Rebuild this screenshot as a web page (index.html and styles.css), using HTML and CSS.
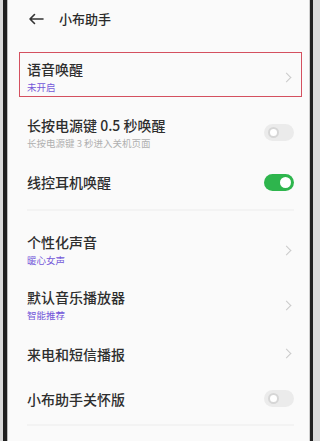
FILE: index.html
```html
<!DOCTYPE html>
<html lang="zh">
<head>
<meta charset="utf-8">
<link rel="stylesheet" href="styles.css">
</head>
<body>
<div class="frame">
  <div class="phone">
    <header class="header">
      <svg class="back" viewBox="0 0 16 12" width="16" height="12"><path d="M15 6H2M6.5 1.5L2 6l4.5 4.5" fill="none" stroke="#333" stroke-width="1.6" stroke-linecap="round" stroke-linejoin="round"/></svg>
      <span class="title">小布助手</span>
    </header>
    <section class="group">
      <div class="row r1 highlight">
        <div class="texts"><div class="main">语音唤醒</div><div class="sub purple">未开启</div></div>
        <span class="chev"></span>
      </div>
      <div class="row r2">
        <div class="texts"><div class="main">长按电源键 0.5 秒唤醒</div><div class="sub gray">长按电源键 3 秒进入关机页面</div></div>
        <span class="toggle off"></span>
      </div>
      <div class="row r3">
        <div class="texts"><div class="main">线控耳机唤醒</div></div>
        <span class="toggle on"></span>
      </div>
    </section>
    <div class="divider"></div>
    <section class="group">
      <div class="row r4">
        <div class="texts"><div class="main">个性化声音</div><div class="sub purple">暖心女声</div></div>
        <span class="chev"></span>
      </div>
      <div class="row r5">
        <div class="texts"><div class="main">默认音乐播放器</div><div class="sub purple">智能推荐</div></div>
        <span class="chev"></span>
      </div>
      <div class="row r6">
        <div class="texts"><div class="main">来电和短信播报</div></div>
        <span class="chev"></span>
      </div>
      <div class="row r7">
        <div class="texts"><div class="main">小布助手关怀版</div></div>
        <span class="toggle off"></span>
      </div>
    </section>
    <div class="divider bottom"></div>
  </div>
</div>
</body>
</html>
```
FILE: styles.css
```css
html, body { margin: 0; padding: 0; }
body {
  width: 315px;
  height: 441px;
  overflow: hidden;
  background: #d9d9d9;
  font-family: "Noto Sans CJK SC", "Noto Sans", sans-serif;
}
.frame {
  height: 441px;
  padding: 0 2px 0 3px;
  box-sizing: border-box;
}
.phone {
  height: 441px;
  background: #fafafa;
  border-left: 4px solid #1f1f1f;
  border-right: 3px solid #1f1f1f;
  box-shadow: inset 1px 0 0 #bdbdbd, inset -1px 0 0 #cfcfcf;
  box-sizing: border-box;
  color: #2a2a2a;
}
.header {
  height: 52px;
  box-sizing: border-box;
  padding: 12px 0 0 21px;
  display: flex;
  align-items: flex-start;
}
.back { margin-top: 1px; }
.title {
  margin-left: 15px;
  font-size: 13px;
  line-height: 14px;
  font-weight: 500;
  color: #2a2a2a;
}
.row {
  display: flex;
  align-items: center;
  padding: 0 16px 0 20px;
  box-sizing: border-box;
}
.texts { flex: 1; }
.main { font-size: 14px; line-height: 16px; font-weight: 500; color: #2e2e2e; }
.sub { font-size: 9.5px; line-height: 12px; margin-top: 4px; }
.purple { color: #7357d9; }
.gray { color: #b0b0b0; }
.r1 { height: 45px; padding-top: 5px; }
.highlight {
  margin: 0 8px 0 12px;
  padding-left: 7px;
  padding-right: 7px;
  border: 1px solid #d4505f;
}
.r2 { height: 71px; }
.r3 { height: 28px; }
.divider {
  height: 2px;
  margin: 13px 16px 12px 20px;
  background: #f3f3f3;
}
.r4 { height: 54px; }
.r5 { height: 56px; }
.r6 { height: 41px; }
.r7 { height: 49px; }
.divider.bottom { margin: 1px 16px 0 20px; }
.chev {
  width: 6px;
  height: 6px;
  border-top: 1.3px solid #cacaca;
  border-right: 1.3px solid #cacaca;
  transform: rotate(45deg);
  margin-right: 4px;
}
.toggle {
  position: relative;
  width: 30px;
  height: 17px;
  border-radius: 9px;
  flex: none;
}
.toggle.off { background: #ebebeb; }
.toggle.on { background: #2eb54d; }
.toggle::after {
  content: "";
  position: absolute;
  top: 3px;
  width: 11px;
  height: 11px;
  border-radius: 50%;
  box-sizing: border-box;
}
.toggle.off::after { left: 4px; background: #fff; border: 2.5px solid #d6d6d6; }
.toggle.on::after { right: 3px; background: #fff; }
```
